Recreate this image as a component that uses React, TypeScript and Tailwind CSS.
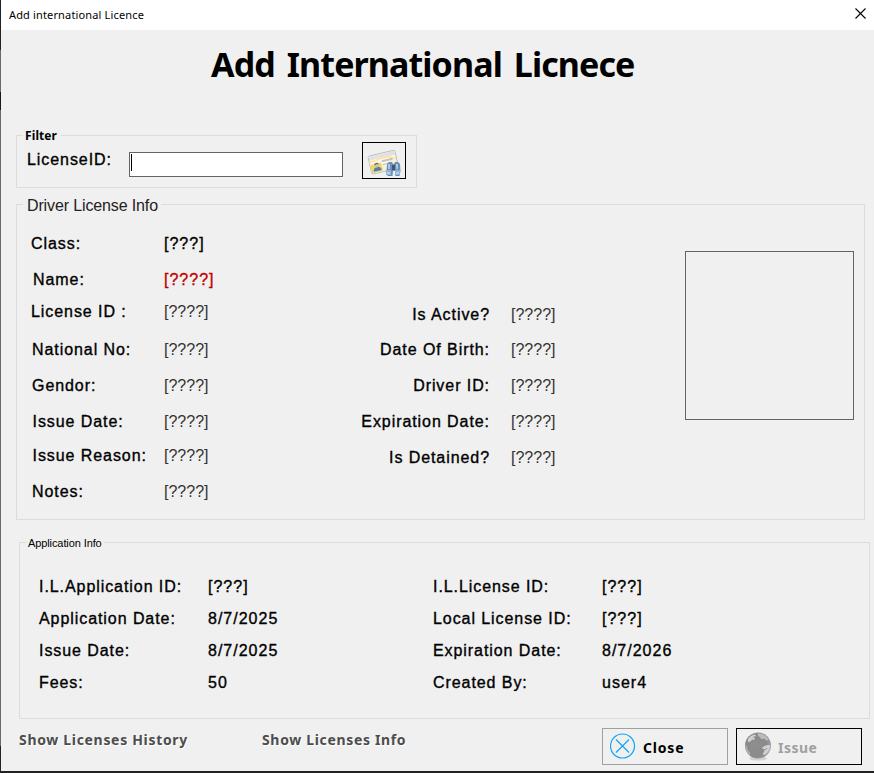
import type { ReactNode } from "react";

const heavy = "[-webkit-text-stroke:0.35px_currentColor] tracking-[1px]";
const heavyLabel = "[-webkit-text-stroke:0.35px_currentColor] tracking-[0.93px]";

type GroupProps = { title: string; legend: string; className: string; children: ReactNode };

function Group({ title, legend, className, children }: GroupProps) {
  return (
    <section className={`border border-[#dcdcdc] ${className}`}>
      <div className="flex h-0 items-center pl-1.5">
        <h2 className={`bg-[#f0f0f0] whitespace-nowrap ${legend}`}>{title}</h2>
      </div>
      {children}
    </section>
  );
}

type Row = { label: string; value: string; size: string; labelClass?: string; valueClass?: string };

const driverLeft: Row[] = [
  { label: "Class:", value: "[???]", size: "h-[36px]", labelClass: "pl-[1px]", valueClass: heavy },
  { label: "Name:", value: "[????]", size: "h-[32px]", labelClass: "pl-[3px]", valueClass: `text-[#c00000] ${heavy}` },
  { label: "License ID :", value: "[????]", size: "h-[38px]", labelClass: "pl-[1px]" },
  { label: "National No:", value: "[????]", size: "h-[36px]", labelClass: "pl-[2px]" },
  { label: "Gendor:", value: "[????]", size: "h-[36px]", labelClass: "pl-[2px]" },
  { label: "Issue Date:", value: "[????]", size: "h-[34px]", labelClass: "pl-[2.5px]" },
  { label: "Issue Reason:", value: "[????]", size: "h-[36px]", labelClass: "pl-[2.5px]" },
  { label: "Notes:", value: "[????]", size: "h-[20px]", labelClass: "pl-[2px]" },
];

const driverRight: Row[] = [
  { label: "Is Active?", value: "[????]", size: "h-[35px]" },
  { label: "Date Of Birth:", value: "[????]", size: "h-[36px]" },
  { label: "Driver ID:", value: "[????]", size: "h-[36px]" },
  { label: "Expiration Date:", value: "[????]", size: "h-[36px]" },
  { label: "Is Detained?", value: "[????]", size: "h-[20px]" },
];

const appLeft = [
  ["I.L.Application ID:", "[???]"],
  ["Application Date:", "8/7/2025"],
  ["Issue Date:", "8/7/2025"],
  ["Fees:", "50"],
];

const appRight = [
  ["I.L.License ID:", "[???]"],
  ["Local License ID:", "[???]"],
  ["Expiration Date:", "8/7/2026"],
  ["Created By:", "user4"],
];

function AppColumn({ rows, className }: { rows: string[][]; className: string }) {
  return (
    <dl className={className}>
      {rows.map(([label, value]) => (
        <div key={label} className="flex h-8">
          <dt className={`w-[169px] whitespace-nowrap ${heavyLabel}`}>{label}</dt>
          <dd className={heavy}>{value}</dd>
        </div>
      ))}
    </dl>
  );
}

function CardIcon() {
  return (
    <svg width="34" height="30" viewBox="0 0 34 30">
      <g transform="rotate(-13 16 14)">
        <rect x="2.500" y="5" width="27.500" height="18.500" rx="1.5" fill="#f6f0e2" stroke="#b4b6b9" strokeWidth=".8" />
        <rect x="3" y="5.500" width="26.500" height="4" fill="#dfe1e3" />
        <path d="M3 10h26v3l-9 2-17 7z" fill="#fdf9ec" />
        <path d="M3 12c7 0 10-2 19-1l7 3v-2l-7-3C14 9 10 11 3 10z" fill="#ffe39a" />
        <path d="M3 14h11v8.500H3z" fill="#f2d46a" />
        <path d="M15 12h11v2H15zM15 16h8v1h-8z" fill="#c0c4ca" />
        <path d="M5 21.500c0-3 2-4 4-4s4 1 4 4z" fill="#4d82ad" />
        <circle cx="9" cy="16" r="2" fill="#dcbf9c" />
        <path d="M6.800 15.500c0-3 4.600-3 4.600 0l-2-1z" fill="#6d6a5d" />
      </g>
      <path d="M20 16l2-2h3l1 2h1l1-2h3l2 2 .5 7-1 5h-4l-.5-5h-2l-.5 5h-5l-1-5z" fill="#6b8fb5" />
      <path d="M19 22h5v5h-5zM28 22h5v5h-5z" fill="#8fb4d6" />
      <path d="M21 16h2v5h-2zM29 16h2v5h-2z" fill="#a9c8e3" />
      <path d="M25 17h3v5h-3z" fill="#46566c" />
      <path d="M20 25h3M29 25h3" stroke="#dceeff" />
    </svg>
  );
}

function GlobeIcon() {
  return (
    <svg width="28" height="29" viewBox="0 0 28 29">
      <defs>
        <radialGradient id="sea" cx=".4" cy=".5" r=".62">
          <stop offset="0" stopColor="#8f8f8f" />
          <stop offset=".7" stopColor="#8a8a8a" />
          <stop offset="1" stopColor="#a2a2a2" />
        </radialGradient>
      </defs>
      <ellipse cx="14" cy="26.500" rx="9" ry="2" fill="#d2d2d2" />
      <circle cx="14" cy="13.500" r="13" fill="url(#sea)" />
      <path d="M4 7c2-3 5-4.500 7-4.500l1 1.500-3 1 2 1.500-1 1.500-2-.5-1.500 2-2.500.5z" fill="#cfcfcf" />
      <path d="M14 1.500c5 0 9 2.500 10.500 6.500l-2 .500-2.500-2-3 .500-1-2-2-1z" fill="#bcbcbc" />
      <path d="M18 16c2-2.500 5-3.500 8-3 .5 4-2 8.500-5.500 10l-2-1 2-3z" fill="#d0d0d0" />
      <path d="M1.300 13l1.500 1 1 4 2.500 3-.5 2c-3-2-4.500-6-4.500-10z" fill="#b0b0b0" />
      <path d="M18.500 17l2.500 1 2-2" stroke="#929292" fill="none" />
    </svg>
  );
}

export default function App() {
  return (
    <div className="flex h-[773px] w-[874px] flex-col overflow-hidden bg-[#f0f0f0] font-['Liberation_Sans',Arial,sans-serif] text-[16px] leading-5 text-black">
      <div className="flex h-[771px]">
        <div className="flex w-px shrink-0 flex-col bg-[#6b6b6b]">
          <div className="h-[50px] bg-[#222]" />
          <div className="h-[42px]" />
          <div className="h-[18px] bg-[#181818]" />
          <div className="h-[636px]" />
          <div className="h-[25px] bg-[#222]" />
        </div>
        <main className="w-[873px]">
          <header className="flex h-[30px] items-center justify-between bg-white pr-2 pl-2 font-['Noto_Sans',sans-serif] text-[11px]">
            <span className="tracking-[0.15px]">Add international Licence</span>
            <svg width="11" height="11" viewBox="0 0 11 11" className="-mt-[3px]" stroke="#000" strokeWidth="1.1">
              <path d="M.5.5l10 10M10.500.5l-10 10" />
            </svg>
          </header>

          <h1 className="h-[105px] pt-[10px] pl-[210px] font-['Noto_Sans',sans-serif] text-[34px] leading-[48px] font-bold tracking-[-0.9px] [word-spacing:4px] whitespace-nowrap">
            Add International Licnece
          </h1>

          <Group title="Filter" legend="pr-1 pl-0.5 font-['Noto_Sans',sans-serif] text-[12px] font-bold tracking-[0.1px]" className="ml-[15px] h-[53px] w-[401px]">
            <div className="flex pt-1.5">
              <label className={`w-[112px] pt-[8px] pl-2.5 whitespace-nowrap ${heavyLabel}`}>LicenseID:</label>
              <div className="mt-[10px] flex h-[25px] w-[214px] border border-[#646464] bg-white pt-px pl-px">
                <span className="h-[17px] w-px bg-black" />
              </div>
              <button className="ml-[19px] flex h-[37px] w-[44px] items-center justify-center border border-black pt-1">
                <CardIcon />
              </button>
            </div>
          </Group>

          <Group title="Driver License Info" legend="relative top-px pr-[3px] pl-1 text-[16px] tracking-[-0.13px] text-[#222]" className="mt-4 ml-[15px] h-[316px] w-[849px]">
            <div className="flex pt-[29px]">
              <dl className="w-[315px] pl-[13px]">
                {driverLeft.map((r) => (
                  <div key={r.label} className={`flex ${r.size}`}>
                    <dt className={`w-[134px] whitespace-nowrap ${heavyLabel} ${r.labelClass ?? ""}`}>{r.label}</dt>
                    <dd className={r.valueClass ?? "text-[#333]"}>{r.value}</dd>
                  </div>
                ))}
              </dl>
              <dl className="w-[353px] pt-[71px]">
                {driverRight.map((r) => (
                  <div key={r.label} className={`flex ${r.size}`}>
                    <dt className={`w-[158px] text-right whitespace-nowrap ${heavyLabel}`}>{r.label}</dt>
                    <dd className="pl-[21px] text-[#333]">{r.value}</dd>
                  </div>
                ))}
              </dl>
              <div className="mt-[17px] h-[169px] w-[169px] border border-[#646464]" />
            </div>
          </Group>

          <Group title="Application Info" legend="px-0.5 text-[11px] leading-3 tracking-[-0.1px]" className="mt-[22px] ml-[18px] h-[177px] w-[851px]">
            <div className="flex pt-[34px] pl-[19px]">
              <AppColumn rows={appLeft} className="w-[394px]" />
              <AppColumn rows={appRight} className="w-[394px]" />
            </div>
          </Group>

          <footer className="flex pl-[18px] font-['Noto_Sans',sans-serif] text-[14px] font-bold">
            <span className="w-[243px] pt-[11px] tracking-[0.68px] text-[#4d4d4d] [text-shadow:1px_1px_0_#fff]">Show Licenses History</span>
            <span className="w-[340px] pt-[11px] tracking-[0.66px] text-[#4d4d4d] [text-shadow:1px_1px_0_#fff]">Show Licenses Info</span>
            <button className="mt-[9px] flex h-[37px] w-[126px] items-center border border-[#a0a0a0] pl-[7px]">
              <svg width="26" height="26" viewBox="0 0 26 26" fill="none" stroke="#12a5f4" strokeWidth="1.2" className="-mt-px">
                <circle cx="12.500" cy="13" r="12" />
                <path d="M6 6.500l13 13M19 6.500l-13 13" />
              </svg>
              <span className="pt-0.5 pl-[7px] tracking-[0.8px]">Close</span>
            </button>
            <button className="mt-[9px] ml-2 flex h-[37px] w-[126px] items-center border border-black pl-[7px] text-[#a0a0a0]">
              <GlobeIcon />
              <span className="pt-0.5 pl-1.5 tracking-[0.5px]">Issue</span>
            </button>
          </footer>
        </main>
      </div>
      <div className="h-0.5 bg-[#222]" />
    </div>
  );
}
